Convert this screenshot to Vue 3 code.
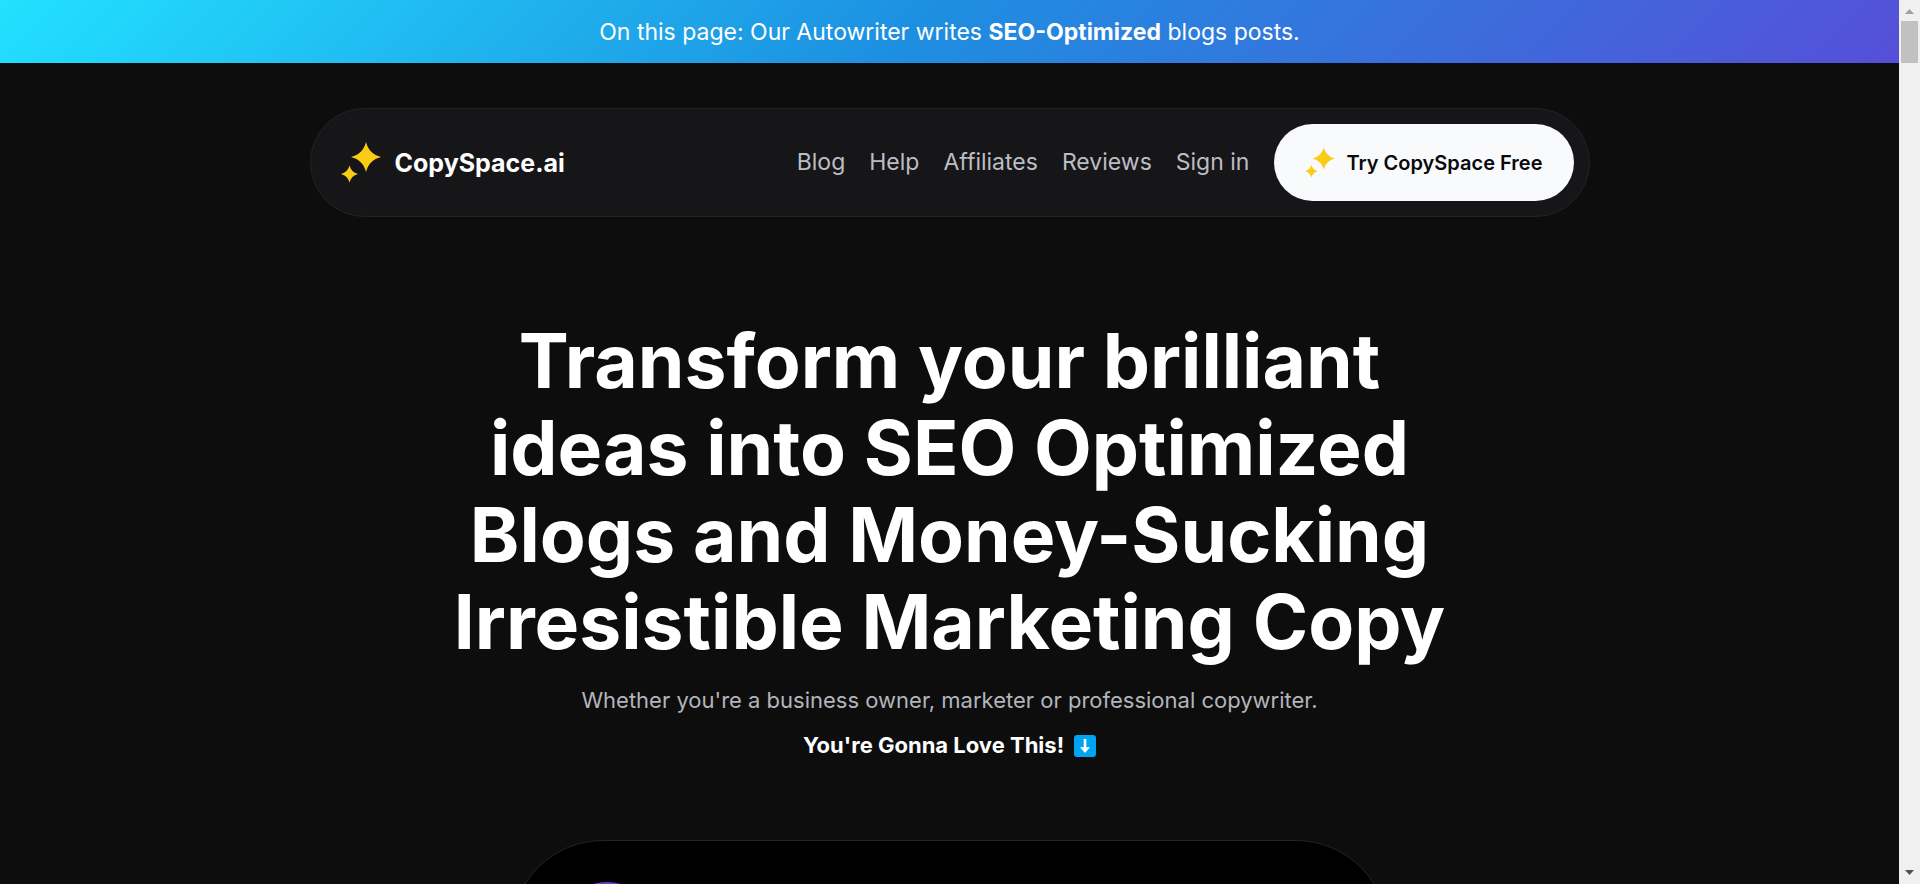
<script setup>
const links = [
    { label: "Blog", href: "#blog" },
    { label: "Help", href: "#help" },
    { label: "Affiliates", href: "#affiliates" },
    { label: "Reviews", href: "#reviews" },
    { label: "Sign in", href: "#signin" },
];
const sparkles =
    "M25 0C27 8 32 13 40 15C32 17 27 22 25 30C23 22 18 17 10 15C18 13 23 8 25 0ZM8.500 23.500C9.600 28 12.500 30.900 17 32C12.500 33.100 9.600 36 8.500 40.500C7.400 36 4.500 33.100 0 32C4.500 30.900 7.400 28 8.500 23.500Z";
</script>

<template>
    <div class="window">
        <div class="page">
            <div class="banner">
                <p>On this page: Our Autowriter writes <strong>SEO-Optimized</strong> blogs posts.</p>
            </div>

            <header class="navbar">
                <a href="#" class="brand">
                    <svg class="brand-icon" viewBox="0 0 40 41" aria-hidden="true"><path :d="sparkles" /></svg>
                    <span>CopySpace.ai</span>
                </a>
                <nav class="links">
                    <a v-for="link in links" :key="link.label" :href="link.href">{{ link.label }}</a>
                </nav>
                <button type="button" class="cta">
                    <svg class="cta-icon" viewBox="0 0 40 41" aria-hidden="true"><path :d="sparkles" /></svg>
                    <span>Try CopySpace Free</span>
                </button>
            </header>

            <main class="hero">
                <h1>
                    Transform your brilliant<br />
                    ideas into SEO Optimized<br />
                    Blogs and Money-Sucking<br />
                    Irresistible Marketing Copy
                </h1>
                <p class="subtitle">Whether you're a business owner, marketer or professional copywriter.</p>
                <p class="love">
                    <span>You're Gonna Love This!</span>
                    <svg class="arrow" viewBox="0 0 22 22" aria-hidden="true">
                        <rect width="22" height="22" rx="3" fill="#00a4ef" />
                        <path d="M9.700 4H12.300V12.300H16L11 18L6 12.300H9.700Z" fill="#fff" />
                    </svg>
                </p>
                <section class="card">
                    <div class="avatar"></div>
                </section>
            </main>
        </div>

        <div class="scrollbar" aria-hidden="true">
            <svg class="scroll-arrow" viewBox="0 0 21 21"><path d="M6 14L10.500 9L15 14Z" fill="#a0a0a0" /></svg>
            <div class="thumb"></div>
            <svg class="scroll-arrow last" viewBox="0 0 21 21"><path d="M6 7L10.500 12L15 7Z" fill="#505050" /></svg>
        </div>
    </div>
</template>

<style>
body {
    margin: 0;
    background: #0d0d0d;
}
</style>

<style scoped>
.window {
    display: flex;
    height: 100vh;
    overflow: hidden;
    font-family: Inter, "Liberation Sans", sans-serif;
    color: #fff;
    background: #0d0d0d;
}

.page {
    flex: 1;
    min-width: 0;
    overflow: hidden;
}

.banner {
    padding: 17px 16px 15px;
    background: linear-gradient(135deg, #22e1ff 0%, #1d8fe1 48%, #564fd8 100%);
    font-size: 23px;
    line-height: 31px;
    text-align: center;
}

.banner p {
    margin: 0;
}

.navbar {
    display: flex;
    align-items: center;
    box-sizing: border-box;
    max-width: 1280px;
    margin: 45px auto 0;
    padding: 15px 15px 15px 30px;
    border: 1px solid #232325;
    border-radius: 55px;
    background: #161618;
}

.brand {
    display: flex;
    align-items: center;
    gap: 14px;
    margin-right: auto;
    color: #fff;
    font-size: 25px;
    font-weight: 700;
    text-decoration: none;
}

.brand-icon {
    width: 40px;
    height: 41px;
    fill: #facc15;
}

.links {
    display: flex;
    gap: 24px;
    margin-right: 25px;
}

.links a {
    color: #bdbdc4;
    font-size: 23px;
    line-height: 31px;
    text-decoration: none;
}

.cta {
    display: flex;
    align-items: center;
    gap: 11px;
    height: 77px;
    padding: 0 31px;
    border: 0;
    border-radius: 40px;
    background: #f9fafc;
    color: #09090b;
    font-family: inherit;
    font-size: 20px;
    font-weight: 600;
    cursor: pointer;
}

.cta-icon {
    width: 30px;
    height: 31px;
    fill: #facc15;
}

.hero {
    display: flex;
    flex-direction: column;
    align-items: center;
    padding-top: 100px;
    text-align: center;
}

h1 {
    margin: 0 0 13px;
    font-size: 75px;
    font-weight: 700;
    line-height: 87px;
}

.subtitle,
.love {
    margin: 0;
    font-size: 22px;
    line-height: 45px;
}

.subtitle {
    color: #b4b4bb;
}

.love {
    display: flex;
    align-items: center;
    gap: 10px;
    font-weight: 700;
}

.arrow {
    width: 22px;
    height: 22px;
}

.card {
    box-sizing: border-box;
    width: 100%;
    max-width: 877px;
    margin-top: 72px;
    padding: 41px 45px;
    border: 1px solid #232325;
    border-radius: 100px;
    background: #000;
}

.avatar {
    width: 100px;
    height: 100px;
    border-radius: 50%;
    background: #6f3cc4;
}

.scrollbar {
    display: flex;
    flex-direction: column;
    width: 21px;
    background: #f0f0f0;
}

.scroll-arrow {
    width: 21px;
    height: 21px;
}

.scroll-arrow.last {
    margin-top: auto;
}

.thumb {
    height: 42px;
    margin: 0 2px;
    background: #c1c1c1;
}
</style>
